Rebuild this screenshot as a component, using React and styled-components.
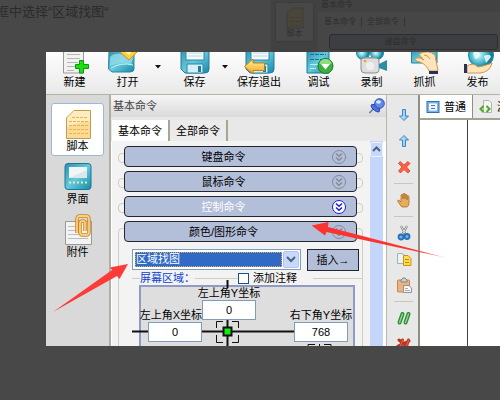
import React from 'react'
import styled, { createGlobalStyle } from 'styled-components'

const GlobalStyle = createGlobalStyle`
    *{
        box-sizing: border-box;
    }
    body{
        margin: 0;
        background: #484848;
        overflow: hidden;
    }
    body, button, input, select{
        font-family: "Liberation Sans", "Noto Sans CJK SC", sans-serif;
        font-size: 11px;
        line-height: 14px;
        color: #000;
    }
`;

const Page = styled.div`
    position: relative;
    display: flex;
    flex-direction: column;
    height: 100vh;
    background: #484848;
`;

/* dimmed page behind the window */
const Backdrop = styled.header`
    display: flex;
    justify-content: space-between;
    height: 52px;
    flex: none;
    overflow: hidden;
`;
const Caption = styled.p`
    margin: 3px 0 0 -4px;
    font-family: "Liberation Sans", "Noto Sans CJK SC", sans-serif;
    font-size: 13px;
    line-height: 18px;
    color: #2b2b2b;
    white-space: nowrap;
`;
const Dimmed = styled.div`
    display: flex;
    width: 229px;
    font-size: 8px;
    line-height: 10px;
    color: #2e2e2e;
`;
const DimSide = styled.div`
    width: 47px;
    padding: 2px 4px;
    background: #414141;
`;
const DimCard = styled.div`
    display: flex;
    flex-direction: column;
    align-items: center;
    height: 40px;
    padding-top: 4px;
    border: 1px solid #3c3c3c;
    border-radius: 2px;
    background: #484848;
`;
const DimPanel = styled.div`
    flex: 1;
    background: #464646;
`;
const DimTitle = styled.div`
    height: 12px;
    padding-left: 3px;
    background: #424242;
`;
const DimTabs = styled.div`
    display: flex;
    padding: 5px 0 5px 1px;
    span{
        padding: 0 5px;
        border-right: 1px solid #333;
    }
`;
const DimBar = styled.div`
    height: 16px;
    margin: 2px 2px 0 11px;
    padding: 2px 26px 2px 0;
    border: 1px solid #2e2e2e;
    border-radius: 3px;
    background: #3d3e42;
    text-align: center;
`;

const Window = styled.main`
    display: flex;
    flex-direction: column;
    flex: 1;
    min-height: 0;
    margin: 0 0 54px 46px;
    background: #ececec;
    overflow: hidden;
`;

const Toolbar = styled.nav`
    display: flex;
    flex: none;
    height: 43px;
    padding-left: 2px;
    border-bottom: 1px solid #b3b3a6;
    background: linear-gradient(#fdfdfd, #e9e9e9);
    overflow: hidden;
`;
const Tool = styled.button`
    display: flex;
    flex-direction: column;
    align-items: center;
    flex: none;
    width: ${props => props.$wide ? '48px' : '53px'};
    padding: 0;
    border: 0;
    background: none;
    white-space: nowrap;
    svg{
        display: block;
    }
`;
const Caret = styled.button`
    width: 8px;
    height: 8px;
    margin: 11px 6px 0 0;
    padding: 0;
    border: 0;
    background: none;
    svg{
        display: block;
    }
`;
const ToolLine = styled.div`
    width: 1px;
    margin: 0 4px 3px 5px;
    background: #cdc9b4;
`;

const Body = styled.div`
    display: flex;
    flex: 1;
    min-height: 0;
`;

const Sidebar = styled.aside`
    flex: none;
    width: 65px;
    padding: 8px 5px 0;
    border-right: 2px solid #b0afa3;
    background: #d9d9d9;
`;
const SideItem = styled.button`
    display: flex;
    flex-direction: column;
    align-items: center;
    width: 53px;
    height: 53px;
    padding: 3px 0 0;
    border: 1px solid ${props => props.$active ? '#9db8d6' : 'transparent'};
    border-radius: 3px;
    background: ${props => props.$active ? '#fff' : 'none'};
`;

const Panel = styled.section`
    display: flex;
    flex-direction: column;
    flex: none;
    width: 275px;
    background: #f3f3f3;
`;
const PanelTitle = styled.div`
    display: flex;
    justify-content: space-between;
    align-items: center;
    flex: none;
    height: 22px;
    padding-left: 2px;
    background: linear-gradient(#f6f6f6, #d9d9d9);
    color: #444;
`;
const Tabs = styled.div`
    display: flex;
    flex: none;
    align-items: stretch;
    height: 24px;
    padding: 3px 0 0 1px;
    background: #e8e8e8;
`;
const Tab = styled.button`
    padding: 0 6px;
    border: 0;
    border-right: 2px solid #a8a593;
    background: ${props => props.$active ? '#fff' : '#ebebeb'};
`;
const Scroller = styled.div`
    display: flex;
    flex: 1;
    min-height: 0;
`;
const Commands = styled.div`
    display: flex;
    flex-direction: column;
    gap: 4px;
    flex: 1;
    padding: 5px 7px 0 6px;
    border-left: 1px solid #fff;
`;
const Scrollbar = styled.div`
    flex: none;
    width: 16px;
    padding-top: 1px;
    border-right: 3px solid #fff;
    background: #c5d6fb;
    svg{
        display: block;
    }
`;
const CommandRow = styled.div`
    position: relative;
    padding: 0 6px;
    &::before, &::after{
        content: "";
        position: absolute;
        top: 7px;
        width: 8px;
        height: 8px;
        border: 1px solid #cfcfbe;
        border-radius: 4px;
    }
    &::before{
        left: 0;
    }
    &::after{
        right: 0;
    }
`;
const CommandButton = styled.button`
    position: relative;
    z-index: 1;
    display: grid;
    grid-template-columns: 1fr 34px;
    align-items: center;
    justify-items: center;
    width: 100%;
    height: 21px;
    padding: 0;
    border: 1px solid #24252e;
    border-radius: 4px;
    background: #b3bed9;
    color: ${props => props.$active ? '#fff' : '#000'};
`;
const Group = styled.div`
    position: relative;
    flex: none;
    height: 160px;
    &::before{
        content: "";
        position: absolute;
        top: 7px;
        left: 0;
        right: 0;
        bottom: 0;
        border: 1px solid #cfcfbe;
        border-radius: 4px;
    }
`;
const GroupHead = styled.div`
    padding: 0 6px;
`;
const PickRow = styled.div`
    position: relative;
    display: flex;
    align-items: flex-start;
    justify-content: space-between;
    padding: 7px 4px 0 14px;
`;
const SelectBox = styled.div`
    position: relative;
    width: 169px;
    height: 21px;
    padding: 2px;
    border: 1px solid #7f9db9;
    background: #fff;
    svg{
        position: absolute;
        top: 1px;
        right: 1px;
        pointer-events: none;
    }
`;
const CommandSelect = styled.select`
    display: block;
    width: 147px;
    height: 15px;
    padding: 0;
    border: 1px dotted #d9ae5c;
    border-radius: 0;
    outline: 0;
    appearance: none;
    background: #316ac5;
    color: #fff;
    line-height: 13px;
`;
const InsertButton = styled.button`
    width: 52px;
    height: 22px;
    padding: 0;
    border: 1px solid #24252e;
    background: #b3bed9;
`;
const Area = styled.fieldset`
    position: relative;
    margin: 0 1px 0 14px;
    padding: 0;
    border: 0;
`;
const AreaHead = styled.div`
    display: flex;
    align-items: center;
    height: 14px;
    color: #0a3fd0;
    &::before{
        content: "";
        width: 8px;
        border-top: 1px solid #cfcfbe;
    }
`;
const Rule = styled.i`
    width: ${props => props.$long ? 'auto' : '43px'};
    flex: ${props => props.$long ? '1' : 'none'};
    margin-left: ${props => props.$long ? '16px' : '0'};
    border-top: 1px solid #cfcfbe;
`;
const Check = styled.label`
    position: relative;
    display: flex;
    align-items: center;
    gap: 4px;
    color: #000;
    input{
        appearance: none;
        width: 11px;
        height: 11px;
        margin: 0;
        border: 1px solid #1c5180;
        background: #fff;
    }
`;
const Screen = styled.div`
    position: relative;
    display: flex;
    align-items: flex-start;
    height: 120px;
    margin: 0 7px 0 7px;
    padding: 0 5px 0 7px;
    border: 2px solid #8f9bc4;
    background: #dedede;
`;
const Lines = styled.svg`
    position: absolute;
    left: -9px;
    top: -10px;
`;
const Field = styled.label`
    position: relative;
    display: flex;
    flex-direction: column;
    align-items: ${props => props.$end ? 'flex-end' : 'center'};
    width: 54px;
    margin-top: ${props => props.$low ? '22px' : '0'};
    margin-left: ${props => props.$last ? 'auto' : '0'};
    line-height: 13px;
    white-space: nowrap;
    input{
        width: 54px;
        height: 20px;
        padding: 0;
        border: 1px solid #7f9db9;
        background: #fff;
        text-align: center;
    }
`;

const EditBar = styled.div`
    flex: none;
    width: 34px;
    padding: 4px 5px 0 7px;
    border-left: 1px solid #b9b8aa;
    border-right: 2px solid #8f8e83;
    background: #e8e8e8;
`;
const EditGroup = styled.div`
    display: flex;
    flex-direction: column;
    align-items: center;
    gap: 10px;
    padding: 8px 0;
    border-bottom: 1px solid #c9c8b6;
    button{
        width: 16px;
        height: 16px;
        padding: 0;
        border: 0;
        background: none;
    }
    svg{
        display: block;
    }
`;

const Editor = styled.section`
    display: flex;
    flex-direction: column;
    flex: 1;
    min-width: 0;
    background: #fff;
`;
const EditorTabs = styled.div`
    display: flex;
    flex: none;
    height: 25px;
    border-bottom: 2px solid #a3a297;
    background: #e8e8e8;
`;
const EditorTab = styled.button`
    display: flex;
    align-items: center;
    gap: 4px;
    flex: none;
    padding: 0 6px;
    border: 0;
    border-right: 1px solid #8f8e83;
    background: ${props => props.$active ? '#fff' : '#ebebeb'};
    white-space: nowrap;
`;
const Sheet = styled.div`
    flex: 1;
    width: 48px;
    border-right: 1px solid #444;
`;
const Arrows = styled.svg`
    position: absolute;
    z-index: 2;
    left: 0;
    top: 0;
    pointer-events: none;
`;

const Gradients = () => (
    <svg width="0" height="0" style={{ position: 'absolute' }} aria-hidden="true">
        <defs>
            <linearGradient id="teal" x1="0" y1="0" x2="1" y2="1">
                <stop offset="0" stopColor="#2f8fae" />
                <stop offset=".5" stopColor="#67c9dc" />
                <stop offset="1" stopColor="#1688a8" />
            </linearGradient>
            <linearGradient id="gold" x1="0" y1="0" x2="0" y2="1">
                <stop offset="0" stopColor="#fff3a0" />
                <stop offset="1" stopColor="#f3a51c" />
            </linearGradient>
            <linearGradient id="blue" x1="0" y1="0" x2="1" y2="0">
                <stop offset="0" stopColor="#dff2ff" />
                <stop offset="1" stopColor="#6fb8ee" />
            </linearGradient>
            <radialGradient id="globe" cx=".4" cy=".5">
                <stop offset="0" stopColor="#d8fbff" />
                <stop offset=".6" stopColor="#55bfd0" />
                <stop offset="1" stopColor="#147f9c" />
            </radialGradient>
            <linearGradient id="fade" gradientUnits="userSpaceOnUse" x1="312" y1="226" x2="447" y2="258">
                <stop offset=".8" stopColor="#fc3430" />
                <stop offset="1" stopColor="#fc3430" stopOpacity=".3" />
            </linearGradient>
        </defs>
    </svg>
)

const Floppy = () => (
    <g>
        <path d="M7 -4H35V17Q35 21 31 21H11L7 17Z" fill="url(#teal)" stroke="#247c9b" />
        <path d="M12 -2H30V8H12Z" fill="#f4fbfd" stroke="#2b87a4" />
        <path d="M14 1H28M14 4H28" stroke="#bcd6de" />
        <path d="M13 12H29V21H13Z" fill="#d4eff5" stroke="#2687a5" />
        <path d="M24 14H27V20H24Z" fill="#277b99" />
    </g>
)

const toolIcons = {
    new: (
        <g>
            <path d="M9.500 -2H29.500V21H9.500Z" fill="#f2f2f2" stroke="#999" />
            <path d="M13 2.500H26M13 6.500H26M13 10.500H24M13 14.500H21M13 18.500H20" stroke="#b5b5b5" />
            <path d="M25.500 8.500H29.500V12.500H34.500V16.500H29.500V21H25.500V16.500H21.500V12.500H25.500Z" fill="#1fdc18" stroke="#0b9c0e" />
        </g>
    ),
    open: (
        <g>
            <path d="M2 -1H27V17Q27 20 23 20H5L1.500 17Z" fill="url(#teal)" stroke="#2a86a3" />
            <path d="M3 5Q7 1 14 2H27L24 13Q14 9 3 14Z" fill="#98dfe9" opacity=".75" />
            <path d="M4 16Q14 10 26 13" stroke="#c6f3f7" fill="none" />
            <path d="M12 -1H31L22 8Z" fill="#ffd23d" stroke="#dc8c13" />
            <path d="M17 -1H25L22 3Z" fill="#fff5b0" />
        </g>
    ),
    save: <Floppy />,
    exit: (
        <g>
            <Floppy />
            <path d="M5.500 14.500L14 7V11H25.500V18.500H14V22Z" fill="url(#gold)" stroke="#c97c10" />
        </g>
    ),
    debug: (
        <g>
            <path d="M9 -2H31V21H9Z" fill="url(#teal)" stroke="#1e7d9b" />
            <path d="M12 2.500H28M12 7.500H25" stroke="#16749a" strokeDasharray="4 1" />
            <path d="M12 12.500H20M12 16.500H18" stroke="#bfeef5" />
            <circle cx="27.500" cy="14" r="7.500" fill="#3fae42" stroke="#187e24" />
            <path d="M21.500 12A6 5 0 0 1 33.500 12Z" fill="#90dc83" />
            <path d="M23 12H32L27.500 17.500Z" fill="#fff" />
        </g>
    ),
    record: (
        <g>
            <circle cx="12" cy="1" r="6.500" fill="url(#globe)" stroke="#218ca8" />
            <circle cx="26" cy="1" r="6.500" fill="url(#globe)" stroke="#218ca8" />
            <path d="M14 5H24V8H14Z" fill="#aaa" />
            <path d="M10 8Q10 6 13 6H25Q28 6 28 9V18Q28 21 24 21H14Q10 21 10 17Z" fill="#dedede" stroke="#8d8d8d" />
            <path d="M28 12L36 8V19L28 16Z" fill="#2c8ea9" />
            <circle cx="14" cy="9" r="1.300" fill="#f39a32" />
            <circle cx="19" cy="14" r="4" fill="#efefef" />
        </g>
    ),
    grab: (
        <g>
            <path d="M7.500 -3H33V11H7.500Z" fill="url(#teal)" stroke="#2384a2" />
            <path d="M15 2Q24 -3 31 3L34 19H25Q23 13 16 10Q10 9 12 6Q16 5 20 8Q16 4 15 2Z" fill="#ffe3bc" stroke="#cf9a42" />
            <path d="M20 3Q24 3 26 7" stroke="#cf9a42" fill="none" />
            <path d="M25 19H34V22H25Z" fill="#27305f" />
        </g>
    ),
    publish: (
        <g>
            <circle cx="24" cy="3" r="12.500" fill="url(#globe)" stroke="#1b87a5" />
            <path d="M16 1Q20 -3 23 2Q22 7 18 7ZM27 4Q33 1 34 5L29 11Z" fill="#effeff" opacity=".85" />
            <path d="M10 14Q16 10 21 15Q28 14 35 11Q33 20 23 21H10Z" fill="#ffe3bc" stroke="#cf9a42" />
            <path d="M7 12H10V21H7Z" fill="#27305f" />
        </g>
    ),
}

const ToolButton = ({ icon, name, wide }) => (
    <Tool $wide={wide}>
        <svg width="41" height="23" viewBox="0 0 41 23">{toolIcons[icon]}</svg>
        {name}
    </Tool>
)

const Drop = ({ label }) => (
    <Caret aria-label={label}>
        <svg width="8" height="8"><path d="M1 2H7L4 5.500Z" fill="#111" /></svg>
    </Caret>
)

const Chevrons = ({ active }) => (
    <svg width="16" height="16" viewBox="0 0 16 16" fill="none" stroke={active ? '#1a1ae0' : '#858a99'}>
        <circle cx="8" cy="8" r="6.500" fill={active ? '#fff' : 'none'} />
        <path d="M5 4.500L8 7.200L11 4.500M5 8.500L8 11.200L11 8.500" strokeWidth="1.500" />
    </svg>
)

const Command = ({ name, active }) => (
    <CommandButton $active={active}>
        <span>{name}</span>
        <Chevrons active={active} />
    </CommandButton>
)

const ScriptIcon = () => (
    <svg width="28" height="32" viewBox="0 0 28 32">
        <path d="M10 3.500H26.500V31.500H2.500V11Z" fill="#fbdb94" stroke="#c69a4c" />
        <path d="M10 4H26V14Q14 15 3 20V11Z" fill="#fff0c8" opacity=".8" />
        <path d="M8 10.500H24M5 14.500H24M5 18.500H24M5 22.500H24M5 26.500H24" stroke="#e6b256" strokeDasharray="3 1" />
    </svg>
)

const ScreenIcon = () => (
    <svg width="28" height="32" viewBox="0 0 28 32">
        <rect x="1" y="3.500" width="26" height="26" rx="3" fill="url(#teal)" stroke="#16799a" />
        <path d="M5 7H23V18H5Z" fill="#f1f6f7" />
        <path d="M5 18L23 10V18Z" fill="#d9e8eb" />
        <path d="M5 22.500H23" stroke="#d6f5a7" strokeWidth="2" strokeDasharray="2 2" />
    </svg>
)

const ClipIcon = () => (
    <svg width="28" height="32" viewBox="0 0 28 32">
        <path d="M1.500 8.500H27.500V31.500H1.500Z" fill="#f3f3f3" stroke="#999" />
        <path d="M4 13.500H14M4 17.500H14M4 21.500H15M4 25.500H24" stroke="#bdbdbd" />
        <path d="M13 20V6Q13 3 16 3H22Q25 3 25 6V19Q25 22 22 22H19Q16 22 16 19V10Q16 8 19 8Q21 8 21 10V18" fill="none" stroke="#c8842a" strokeWidth="3.500" />
        <path d="M13 20V6Q13 3 16 3H22Q25 3 25 6V19Q25 22 22 22H19Q16 22 16 19V10Q16 8 19 8Q21 8 21 10V18" fill="none" stroke="#fbd07c" strokeWidth="1.800" />
    </svg>
)

const PinIcon = () => (
    <svg width="18" height="18" viewBox="0 0 18 18">
        <path d="M1.500 16L7 10" stroke="#6577ad" strokeWidth="1.500" />
        <path d="M3 8Q7 6 10 9Q13 12 11 15Q8 15 6 13Q3 11 3 8Z" fill="#4c74da" stroke="#2848a8" />
        <circle cx="11.500" cy="6.500" r="4.800" fill="#5e8be8" stroke="#2b4db4" />
        <ellipse cx="10.500" cy="5" rx="2.500" ry="1.800" fill="#dbe9ff" />
    </svg>
)

const edits = [
    [
        ['下移', <path d="M6.500 2.500H9.500V9H12.500L8 13.500L3.500 9H6.500Z" fill="url(#blue)" stroke="#3585cb" />],
        ['上移', <path d="M6.500 13.500H9.500V7H12.500L8 2.500L3.500 7H6.500Z" fill="url(#blue)" stroke="#3585cb" />],
        ['删除', <path d="M4 2.500L8 6L12 2.500L14 4.500L10.500 8L14 12L12 14L8 10.500L4.500 14L2.500 12L6 8L2.500 4.500Z" fill="#ff6045" stroke="#d84028" strokeWidth=".8" />],
    ],
    [
        ['手形', <path d="M5 14L1.500 9Q2 7 4 9L5 10V3Q6 1.500 7 3V7V2Q8 .5 9 2V7V2.500Q10 1.500 11 3V8V4Q12 3 13 4.500V11Q13 14 11 15H6Z" fill="#e8ad5c" stroke="#a9702c" strokeWidth=".8" />],
    ],
    [
        ['剪切', (
            <g>
                <path d="M5 1L9.500 9M11 1L6.500 9" stroke="#777" strokeWidth="2.200" />
                <path d="M5 1L9.500 9M11 1L6.500 9" stroke="#e6e6e6" />
                <circle cx="5" cy="12" r="2.500" fill="#74b0e4" stroke="#2472b7" strokeWidth="1.800" />
                <circle cx="11" cy="11.500" r="2.500" fill="#74b0e4" stroke="#2472b7" strokeWidth="1.800" />
            </g>
        )],
        ['复制', (
            <g>
                <path d="M1.500 2.500H6L9.500 5V12.500H1.500Z" fill="#e9f3f5" stroke="#9db5b8" />
                <path d="M7.500 4.500H12L15 7.500V14.500H7.500Z" fill="#ffdb4e" stroke="#c99613" />
                <path d="M9 8.500H13M9 11.500H13" stroke="#b8891b" />
            </g>
        )],
        ['粘贴', (
            <g>
                <rect x="1.500" y="3" width="12" height="12" rx="1" fill="#f0b27b" stroke="#c48647" />
                <path d="M5 5V3L7 1H9L11 3V5Z" fill="#c9d0d0" stroke="#7d8888" />
                <path d="M7.500 8.500H13L15.500 11V15.500H7.500Z" fill="#f5f7fa" stroke="#8d929f" />
                <path d="M9 11.500H12M9 13.500H14" stroke="#aaa" />
            </g>
        )],
    ],
    [
        ['注释', (
            <g strokeLinecap="round">
                <path d="M3.500 12.500L6.500 4M9.500 12.500L12.500 4" stroke="#278b31" strokeWidth="4" />
                <path d="M3.500 12.500L6.500 4M9.500 12.500L12.500 4" stroke="#8bd58a" strokeWidth="1.500" />
            </g>
        )],
        ['取消注释', (
            <g strokeLinecap="round">
                <path d="M3.500 13L6.500 4M9.500 13L12.500 4M3 4L14 13M2 10L13 5" stroke="#b93620" strokeWidth="3" />
                <path d="M3.500 13L6.500 4M9.500 13L12.500 4" stroke="#e9694c" />
            </g>
        )],
    ],
]

const App = () => {
    return (
        <Page>
            <GlobalStyle />
            <Gradients />
            <Backdrop>
                <Caption>框中选择“区域找图“</Caption>
                <Dimmed>
                    <DimSide>
                        <DimCard>
                            <svg width="18" height="22" viewBox="0 0 18 22">
                                <path d="M6 1H17V21H1V6Z" fill="#49453b" stroke="#403d36" />
                                <path d="M4 10.500H15M4 14.500H15M4 18.500H15" stroke="#403c31" strokeDasharray="2 1" />
                            </svg>
                            脚本
                        </DimCard>
                    </DimSide>
                    <DimPanel>
                        <DimTitle>基本命令</DimTitle>
                        <DimTabs>
                            <span>基本命令</span>
                            <span>全部命令</span>
                        </DimTabs>
                        <DimBar>键盘命令</DimBar>
                    </DimPanel>
                </Dimmed>
            </Backdrop>

            <Window>
                <Toolbar>
                    <ToolButton icon="new" name="新建" />
                    <ToolButton icon="open" name="打开" />
                    <Drop label="打开" />
                    <ToolButton icon="save" name="保存" />
                    <Drop label="保存" />
                    <ToolButton icon="exit" name="保存退出" wide />
                    <ToolLine />
                    <ToolButton icon="debug" name="调试" />
                    <ToolButton icon="record" name="录制" />
                    <ToolButton icon="grab" name="抓抓" />
                    <ToolButton icon="publish" name="发布" />
                </Toolbar>

                <Body>
                    <Sidebar>
                        <SideItem $active><ScriptIcon />脚本</SideItem>
                        <SideItem><ScreenIcon />界面</SideItem>
                        <SideItem><ClipIcon />附件</SideItem>
                    </Sidebar>

                    <Panel>
                        <PanelTitle>基本命令<PinIcon /></PanelTitle>
                        <Tabs>
                            <Tab $active>基本命令</Tab>
                            <Tab>全部命令</Tab>
                        </Tabs>
                        <Scroller>
                            <Commands>
                                <CommandRow><Command name="键盘命令" /></CommandRow>
                                <CommandRow><Command name="鼠标命令" /></CommandRow>
                                <CommandRow><Command name="控制命令" active /></CommandRow>
                                <Group>
                                    <GroupHead><Command name="颜色/图形命令" /></GroupHead>
                                    <PickRow>
                                        <SelectBox>
                                            <CommandSelect aria-label="颜色/图形命令">
                                                <option>区域找图</option>
                                            </CommandSelect>
                                            <svg width="16" height="17" viewBox="0 0 16 17">
                                                <rect x=".5" y=".5" width="15" height="16" rx="1.500" fill="#c8d8fa" stroke="#b0c5ee" />
                                                <path d="M4 6L8 10L12 6" fill="none" stroke="#4d6185" strokeWidth="2" />
                                            </svg>
                                        </SelectBox>
                                        <InsertButton>插入→</InsertButton>
                                    </PickRow>
                                    <Area>
                                        <AreaHead>
                                            屏幕区域：
                                            <Rule />
                                            <Check><input type="checkbox" />添加注释</Check>
                                            <Rule $long />
                                        </AreaHead>
                                        <Screen>
                                            <Lines width="212" height="90" viewBox="0 0 212 90">
                                                <path d="M95.500 3V11M95.500 40V90M0 54.500H170" stroke="#111" strokeWidth="2" />
                                                <path d="M84.500 51V44.500H91M100 44.500H106.500V51M106.500 58V65.500H100M91 65.500H84.500V58" fill="none" stroke="#111" />
                                                <rect x="91.500" y="50.500" width="8" height="8" fill="#10ee10" stroke="#111" strokeWidth="2" />
                                                <path d="M176 70V67.500H183M192 67.500H199V70M187.500 67V75" fill="none" stroke="#111" />
                                            </Lines>
                                            <Field $low $end>左上角X坐标<input defaultValue="0" /></Field>
                                            <Field>左上角Y坐标<input defaultValue="0" /></Field>
                                            <Field $low $last>右下角Y坐标<input defaultValue="768" /></Field>
                                        </Screen>
                                    </Area>
                                </Group>
                            </Commands>
                            <Scrollbar>
                                <svg width="13" height="15" viewBox="0 0 13 15">
                                    <rect x=".5" y=".5" width="12" height="14" rx="1.500" fill="#c8d8fa" stroke="#eef3ff" />
                                    <path d="M3 9L6.500 5.500L10 9" fill="none" stroke="#4d6185" strokeWidth="2" />
                                </svg>
                            </Scrollbar>
                        </Scroller>
                    </Panel>

                    <EditBar>
                        {edits.map((group, i) => (
                            <EditGroup key={i}>
                                {group.map(([label, icon]) => (
                                    <button key={label} aria-label={label}>
                                        <svg width="16" height="16" viewBox="0 0 16 16">{icon}</svg>
                                    </button>
                                ))}
                            </EditGroup>
                        ))}
                    </EditBar>

                    <Editor>
                        <EditorTabs>
                            <EditorTab $active>
                                <svg width="14" height="14" viewBox="0 0 14 14">
                                    <rect x="1" y="1.500" width="12" height="11" fill="#7db4ea" stroke="#326fae" />
                                    <path d="M3.500 4H10.500V10H3.500Z" fill="#e6f3ff" stroke="#fff" />
                                    <path d="M5 5.500H9M5 8.500H9" stroke="#3e7dc0" />
                                </svg>
                                普通
                            </EditorTab>
                            <EditorTab>
                                <svg width="14" height="14" viewBox="0 0 14 14">
                                    <path d="M4.500 .5H10L12.500 3V12.500H4.500Z" fill="#f5f5f5" stroke="#b4b4b4" />
                                    <path d="M4.500 6L1.500 9L4.500 12M7.500 6L10.500 9L7.500 12" fill="none" stroke="#54a52c" strokeWidth="2" />
                                </svg>
                                源文件
                            </EditorTab>
                        </EditorTabs>
                        <Sheet />
                    </Editor>
                </Body>
            </Window>

            <Arrows width="500" height="400" viewBox="0 0 500 400">
                <path d="M53 312L112 270L110 267.500L128 264L119.500 279L117 276Z" fill="#fc3c38" />
                <path d="M311.500 225.500L328.500 222L328 227L447 258L326.500 232L325 235.500Z" fill="url(#fade)" />
            </Arrows>
        </Page>
    )
}

export default App
